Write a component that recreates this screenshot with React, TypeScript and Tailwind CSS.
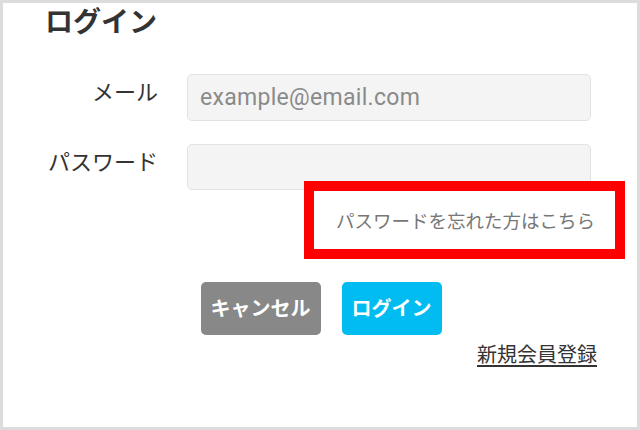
import React from 'react'

export default function App() {
  return (
    <div
      className="relative w-[640px] h-[430px] bg-white border-[3px] border-[#dcdcdc] text-[#333]"
      style={{ fontFamily: "Roboto, 'Noto Sans CJK JP', sans-serif" }}
    >
      <h1 className="ml-[42px] mt-[2px] text-[28px] leading-[36px] font-bold">ログイン</h1>

      <div className="pl-[37px] pr-[42px] mt-[33px]">
        <div className="flex items-start gap-[29px]">
          <label className="w-[118px] mt-[8px] text-right text-[22px] leading-[22px]">メール</label>
          <input
            type="email"
            placeholder="example@email.com"
            className="w-[404px] h-[47px] px-[12px] rounded-[5px] border border-[#e2e2e2] bg-[#f4f4f4] text-[23px] tracking-[0.3px] placeholder:text-[#8a8a8a] outline-none"
          />
        </div>

        <div className="flex items-start gap-[29px] mt-[23px]">
          <label className="w-[118px] mt-[8px] text-right text-[22px] leading-[22px]">パスワード</label>
          <input
            type="password"
            className="w-[404px] h-[46px] px-[12px] rounded-[5px] border border-[#e2e2e2] bg-[#f4f4f4] text-[20px] outline-none"
          />
        </div>

        <div className="mt-[23px] text-right text-[18.5px] leading-[18px] text-[#777]">
          <a href="#">パスワードを忘れた方はこちら</a>
        </div>
      </div>

      <div className="flex justify-center gap-[21px] mt-[51px] pl-[2px]">
        <button className="h-[53px] px-[10px] rounded-[5px] bg-[#888] text-white text-[20px] font-bold">
          キャンセル
        </button>
        <button className="h-[53px] px-[10px] rounded-[5px] bg-[#00bcf0] text-white text-[20px] font-bold">
          ログイン
        </button>
      </div>

      <div className="pr-[40px] mt-[10px] text-right text-[20px] leading-[20px]">
        <a href="#" className="underline underline-offset-[3px]">新規会員登録</a>
      </div>

      {/* annotation */}
      <div className="absolute left-[301px] top-[178px] w-[321px] h-[78px] border-[10px] border-[#ff0000]" />
    </div>
  )
}
